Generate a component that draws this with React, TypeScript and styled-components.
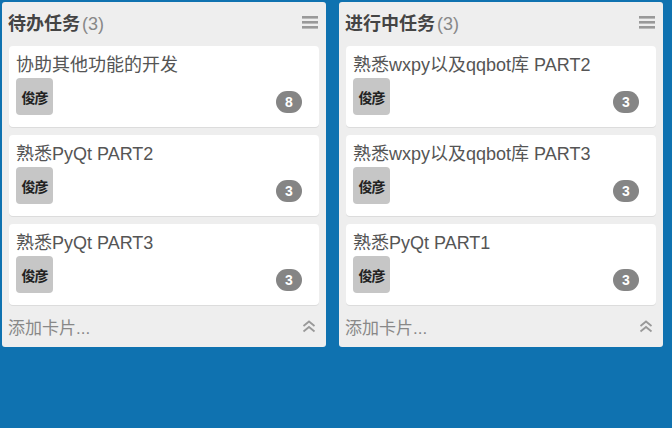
import React from "react";
import styled, { createGlobalStyle } from "styled-components";

const Global = createGlobalStyle`
  html, body { margin: 0; padding: 0; }
  body {
    background: #0f72b0;
    font-family: "Liberation Sans", "Noto Sans CJK SC", sans-serif;
    width: 672px;
    height: 428px;
    overflow: hidden;
  }
`;

const Board = styled.div`
  display: flex;
  align-items: flex-start;
  gap: 13px;
  padding: 2px 0 0 2px;
`;

const Column = styled.div`
  width: 324px;
  background: #eeeeee;
  border-radius: 3px;
  display: flex;
  flex-direction: column;
  padding: 0 7px;
  box-sizing: border-box;
`;

const Header = styled.div`
  height: 44px;
  display: flex;
  align-items: center;
  justify-content: space-between;
  padding: 0 1px 4px 0;
  box-sizing: border-box;
`;

const Title = styled.div`
  font-size: 18px;
  font-weight: bold;
  color: #444;
  display: flex;
  align-items: baseline;
  margin-left: -1px;
`;

const Count = styled.span`
  font-weight: normal;
  color: #888;
  margin-left: 2px;
`;

const Cards = styled.div`
  display: flex;
  flex-direction: column;
  gap: 8px;
`;

const Card = styled.div`
  background: #fff;
  border-radius: 4px;
  height: 81px;
  box-sizing: border-box;
  padding: 7px 17px 0 7px;
  box-shadow: 0 1px 0 #dcdcdc;
`;

const CardTitle = styled.div`
  font-size: 18px;
  color: #555;
  line-height: 24px;
  white-space: nowrap;
`;

const CardRow = styled.div`
  display: flex;
  align-items: flex-end;
  justify-content: space-between;
  margin-top: 1px;
`;

const Avatar = styled.div`
  width: 37px;
  height: 37px;
  border-radius: 4px;
  background: #c6c6c6;
  color: #222;
  font-size: 14px;
  font-weight: bold;
  display: flex;
  align-items: center;
  justify-content: center;
  letter-spacing: -1px;
`;

const Badge = styled.div`
  width: 26px;
  height: 22px;
  border-radius: 11px;
  background: #858585;
  color: #fff;
  font-size: 14px;
  font-weight: bold;
  display: flex;
  align-items: center;
  justify-content: center;
  margin-bottom: 2px;
`;

const Footer = styled.div`
  height: 42px;
  display: flex;
  align-items: center;
  justify-content: space-between;
  padding: 1px 3px 0 0;
  box-sizing: border-box;
`;

const AddText = styled.div`
  font-size: 17px;
  color: #888;
  margin-left: -1px;
`;

const MenuIcon = () => (
  <svg width="16" height="13" viewBox="0 0 16 13">
    <rect x="0" y="0" width="16" height="2.6" fill="#999" />
    <rect x="0" y="5" width="16" height="2.6" fill="#999" />
    <rect x="0" y="10" width="16" height="2.6" fill="#999" />
  </svg>
);

const UpIcon = () => (
  <svg width="14" height="13" viewBox="0 0 14 13">
    <path d="M1.5 6 L7 1.5 L12.5 6" fill="none" stroke="#999" strokeWidth="1.8" />
    <path d="M1.5 11.5 L7 7 L12.5 11.5" fill="none" stroke="#999" strokeWidth="1.8" />
  </svg>
);

type Task = { title: string; who: string; n: number };

const columns: { name: string; tasks: Task[] }[] = [
  {
    name: "待办任务",
    tasks: [
      { title: "协助其他功能的开发", who: "俊彦", n: 8 },
      { title: "熟悉PyQt PART2", who: "俊彦", n: 3 },
      { title: "熟悉PyQt PART3", who: "俊彦", n: 3 },
    ],
  },
  {
    name: "进行中任务",
    tasks: [
      { title: "熟悉wxpy以及qqbot库 PART2", who: "俊彦", n: 3 },
      { title: "熟悉wxpy以及qqbot库 PART3", who: "俊彦", n: 3 },
      { title: "熟悉PyQt PART1", who: "俊彦", n: 3 },
    ],
  },
];

export default function App() {
  return (
    <>
      <Global />
      <Board>
        {columns.map((c) => (
          <Column key={c.name}>
            <Header>
              <Title>
                {c.name}
                <Count>({c.tasks.length})</Count>
              </Title>
              <MenuIcon />
            </Header>
            <Cards>
              {c.tasks.map((t, i) => (
                <Card key={i}>
                  <CardTitle>{t.title}</CardTitle>
                  <CardRow>
                    <Avatar>{t.who}</Avatar>
                    <Badge>{t.n}</Badge>
                  </CardRow>
                </Card>
              ))}
            </Cards>
            <Footer>
              <AddText>添加卡片...</AddText>
              <UpIcon />
            </Footer>
          </Column>
        ))}
      </Board>
    </>
  );
}
